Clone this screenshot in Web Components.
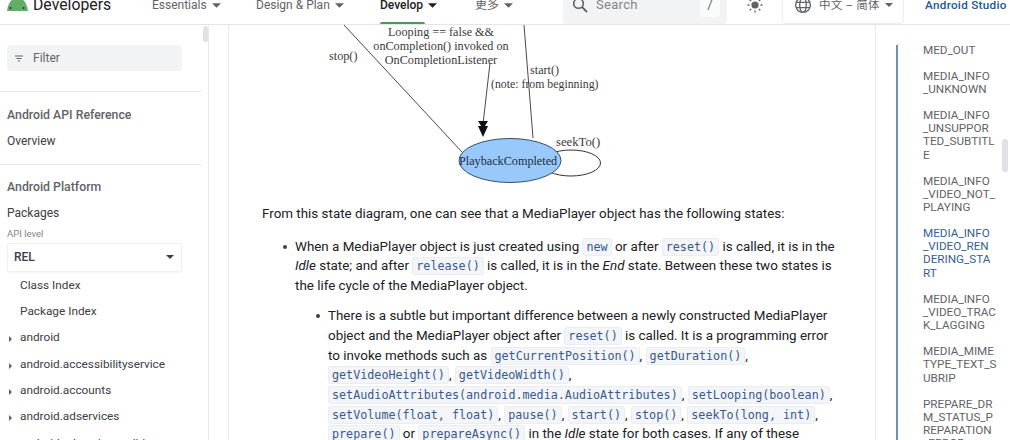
<!DOCTYPE html>
<html lang="zh"><head><meta charset="utf-8"><title>MediaPlayer</title>
<style>
html,body{margin:0;padding:0;background:#fff}
body{font-family:Roboto,"Noto Sans CJK SC",sans-serif;color:#202124}
</style></head><body>
<dev-page>
  <dev-header slot="header"></dev-header>
  <side-nav slot="nav">
    <nav-filter></nav-filter>
    <nav-rule></nav-rule>
    <nav-head>Android API Reference</nav-head>
    <nav-link>Overview</nav-link>
    <nav-rule tight></nav-rule>
    <nav-head>Android Platform</nav-head>
    <nav-link>Packages</nav-link>
    <api-select></api-select>
    <nav-link indent>Class Index</nav-link>
    <nav-link indent>Package Index</nav-link>
    <nav-link indent arrow>android</nav-link>
    <nav-link indent arrow>android.accessibilityservice</nav-link>
    <nav-link indent arrow>android.accounts</nav-link>
    <nav-link indent arrow>android.adservices</nav-link>
    <nav-link indent arrow>android.adservices.adid</nav-link>
  </side-nav>
  <doc-article slot="main">
    <state-diagram></state-diagram>
    <doc-para>From this state diagram, one can see that a MediaPlayer object has the following states:</doc-para>
    <doc-item>When a MediaPlayer object is just created using <c-chip>new</c-chip> or after <c-chip>reset()</c-chip> is called, it is in the<br><i>Idle</i> state; and after <c-chip>release()</c-chip> is called, it is in the <i>End</i> state. Between these two states is<br>the life cycle of the MediaPlayer object.</doc-item>
    <doc-item nested>There is a subtle but important difference between a newly constructed MediaPlayer<br>object and the MediaPlayer object after <c-chip>reset()</c-chip> is called. It is a programming error<br>to invoke methods such as <c-chip>getCurrentPosition()</c-chip>, <c-chip>getDuration()</c-chip>,<br><c-chip>getVideoHeight()</c-chip>, <c-chip>getVideoWidth()</c-chip>,<br><c-chip>setAudioAttributes(android.media.AudioAttributes)</c-chip>, <c-chip>setLooping(boolean)</c-chip>,<br><c-chip>setVolume(float, float)</c-chip>, <c-chip>pause()</c-chip>, <c-chip>start()</c-chip>, <c-chip>stop()</c-chip>, <c-chip>seekTo(long, int)</c-chip>,<br><c-chip>prepare()</c-chip> or <c-chip>prepareAsync()</c-chip> in the <i>Idle</i> state for both cases. If any of these</doc-item>
  </doc-article>
  <toc-rail slot="toc">
    <toc-item>MED_OUT</toc-item>
    <toc-item>MEDIA_INFO<br>_UNKNOWN</toc-item>
    <toc-item>MEDIA_INFO<br>_UNSUPPOR<br>TED_SUBTITL<br>E</toc-item>
    <toc-item>MEDIA_INFO<br>_VIDEO_NOT_<br>PLAYING</toc-item>
    <toc-item active>MEDIA_INFO<br>_VIDEO_REN<br>DERING_STA<br>RT</toc-item>
    <toc-item>MEDIA_INFO<br>_VIDEO_TRAC<br>K_LAGGING</toc-item>
    <toc-item>MEDIA_MIME<br>TYPE_TEXT_S<br>UBRIP</toc-item>
    <toc-item>PREPARE_DR<br>M_STATUS_P<br>REPARATION<br>_ERROR</toc-item>
  </toc-rail>
</dev-page>
<script>
const def=(name,html)=>{customElements.define(name,class extends HTMLElement{
  constructor(){super();this.attachShadow({mode:'open'}).innerHTML=html;}
});};
const caret=(c='#5f6368',w=9,h=5)=>`<svg width="${w}" height="${h}" viewBox="0 0 10 5" style="flex:none"><path d="M0 0h10L5 5z" fill="${c}"/></svg>`;

def('dev-page',`<style>
:host{display:flex;flex-direction:column;width:1010px;height:440px;overflow:hidden;background:#fff}
.row{display:flex;flex:1;min-height:0}
.gutter{width:19px;flex:none;background:#fff;border-right:1px solid #e8eaed}
</style>
<slot name="header"></slot>
<div class="row"><slot name="nav"></slot><div class="gutter"></div><slot name="main"></slot><slot name="toc"></slot></div>`);

def('dev-header',`<style>
:host{display:flex;align-items:center;position:relative;height:24px;border-bottom:1px solid #e3e5e8;box-sizing:content-box;overflow:hidden;font:12px/16px Roboto,"Noto Sans CJK SC",sans-serif;color:#5f6368;background:#fff}
.in{display:flex;align-items:center;height:10px;margin-top:-14px;width:100%}
.logo{display:flex;align-items:center;margin-left:7px;width:145px;flex:none;height:10px}
.brand{font-size:15.800px;color:#202124;margin-left:5px;line-height:20px}
.tab{display:flex;align-items:center;gap:5px;flex:none}
.dev{color:#202124;font-weight:500}
.search{display:flex;align-items:center;flex:none;width:164px;height:38px;margin-left:32px;background:#f1f3f4;border-radius:4px;box-sizing:border-box;padding-left:8px;color:#80868b;font-size:13px;letter-spacing:.3px}
.search b{font-weight:400;margin-left:7px;flex:1}
.key{width:20px;height:24px;background:#fafbfb;border-radius:4px;margin-right:7px;text-align:center;line-height:24px;color:#5f6368}
.lang{display:flex;align-items:center;height:38px;box-sizing:border-box;border:1px solid #eceef0;border-radius:4px;width:122px;margin-left:18px;padding-left:11px;gap:5px;flex:none;font-size:11.500px;letter-spacing:.2px}
.as{margin-left:21px;color:#1a5a96;font-weight:500;font-size:11.700px;white-space:nowrap;letter-spacing:.3px}
.sun{margin-left:19px;flex:none}
.bar{position:absolute;left:380px;top:22px;width:45px;height:2px;background:#4c9a55;border-radius:2px 2px 0 0}
</style>
<div class="in">
<div class="logo"><svg width="21" height="11" viewBox="0 0 21 11" style="flex:none"><path d="M0 11C.8 4 4 -2 10.500 -2S20.200 4 21 11z" fill="#62ab69"/><circle cx="3.500" cy="8" r="1" fill="#1d3a22"/><circle cx="16.500" cy="8" r="1" fill="#1d3a22"/></svg><span class="brand">Developers</span></div>
<div class="tab" style="width:104px">Essentials ${caret()}</div>
<div class="tab" style="width:124px">Design &amp; Plan ${caret()}</div>
<div class="tab dev" style="width:95px">Develop ${caret('#202124')}</div>
<div class="tab" style="width:56px">更多 ${caret()}</div>
<div class="search"><svg width="18" height="18" viewBox="0 0 18 18"><circle cx="7.500" cy="7.500" r="4.800" fill="none" stroke="#5f6368" stroke-width="1.600"/><path d="M11 11l5 5" stroke="#5f6368" stroke-width="1.800"/></svg><b>Search</b><span class="key">/</span></div>
<svg class="sun" width="18" height="18" viewBox="0 0 18 18"><circle cx="9" cy="9" r="3.600" fill="#5f6368"/><path d="M9 1.500v2M9 14.500v2M1.500 9h2M14.500 9h2M3.700 3.700l1.400 1.400M12.900 12.900l1.400 1.400M3.700 14.300l1.400-1.400M12.900 5.100l1.400-1.400" stroke="#5f6368" stroke-width="1.400"/></svg>
<div class="lang"><svg width="18" height="18" viewBox="0 0 18 18" fill="none" stroke="#5f6368" stroke-width="1.300" style="flex:none;margin-right:2px"><circle cx="9" cy="9" r="7.400"/><ellipse cx="9" cy="9" rx="3.300" ry="7.400"/><path d="M2 6.400h14M2 11.600h14"/></svg><span>中文 – 简体</span>${caret('#5f6368',8,4)}</div>
<div class="as">Android Studio</div>
</div>
<div class="bar"></div>`);

def('side-nav',`<style>
:host{display:block;width:208px;flex:none;box-sizing:content-box;border-right:1px solid #e8eaed;position:relative;overflow:hidden;background:#fff;font-size:12px}
.pad{padding-top:20px}
.thumb{position:absolute;right:0;top:1px;width:5px;height:16px;border-radius:3px;background:#dfe1e4}
</style><div class="pad"><slot></slot></div><div class="thumb"></div>`);

def('nav-filter',`<style>
:host{display:flex;align-items:center;margin-left:7px;width:175px;height:26px;background:#f1f3f4;border-radius:4px;color:#5f6368;font-size:12px}
svg{margin:0 10px 0 8px}
</style><svg width="8" height="7" viewBox="0 0 8 7"><path d="M0 1h8M1.500 3.500h5M3 6h2" stroke="#5f6368" stroke-width="1"/></svg>Filter`);

def('nav-rule',`<style>:host{display:block;width:202px;height:1px;background:#e8eaed;margin:20px 0 0}:host([tight]){margin-top:10px}</style>`);

def('nav-head',`<style>:host{display:block;margin:14.500px 0 5px 7px;font-weight:500;font-size:12.300px;line-height:16px;color:#5f6368}</style><slot></slot>`);

def('nav-link',`<style>
:host{display:block;position:relative;height:26.350px;line-height:26.350px;padding-left:7px;font-size:12px;color:#3c4043;white-space:nowrap}
:host([indent]){padding-left:20px;font-size:11.800px}
.a{display:none;position:absolute;left:9px;top:12px;width:0;height:0;border-left:3px solid #5f6368;border-top:3px solid transparent;border-bottom:3px solid transparent}
:host([arrow]) .a{display:block}
</style><span class="a"></span><slot></slot>`);

def('api-select',`<style>
:host{display:block;margin:3px 0 0 7px;width:175px;color:#3c4043}
.l{font-size:9.500px;line-height:12px;color:#80868b;height:12px;margin-top:-2px}
.b{display:flex;align-items:center;justify-content:space-between;height:29px;margin-top:3px;border:1px solid #eef0f2;box-sizing:border-box;border-radius:2px;padding:0 7px 0 6px;font-weight:500;font-size:12px;color:#3c4043;box-shadow:0 1px 2px rgba(60,64,67,.06)}
</style><div class="l">API level</div><div class="b">REL ${caret('#3c4043',8,4)}</div>`);

def('doc-article',`<style>
:host{display:block;flex:1;min-width:0;box-sizing:border-box;border-right:1px solid #e8eaed;overflow:hidden;font-size:13.400px;line-height:19.700px;color:#202124;background:#fff}
</style><slot></slot>`);

def('state-diagram',`<style>
:host{display:block;height:179px}
svg{display:block}
text{font-family:"Liberation Serif",serif;font-size:12.200px;fill:#3a3a3a}
</style>
<svg width="646" height="179" viewBox="229 25 646 179">
<g fill="none" stroke="#4a4a4a" stroke-width="1">
<path d="M344 25L462 152"/><path d="M524 25L533 138"/><path d="M490 63L483 124"/>
<ellipse cx="571" cy="163" rx="29.500" ry="13" stroke="#333"/></g>
<path d="M478 121h10l-5 8z" fill="#111"/><path d="M478 126h10l-5 11z" fill="#111"/>
<ellipse cx="510" cy="160.500" rx="51" ry="22" fill="#99c9fb" stroke="#30506f" stroke-width="1"/>
<text x="441" y="36" text-anchor="middle">Looping == false &amp;&amp;</text>
<text x="441" y="50" text-anchor="middle">onCompletion() invoked on</text>
<text x="441" y="64" text-anchor="middle">OnCompletionListener</text>
<text x="329" y="60">stop()</text>
<text x="530" y="74">start()</text>
<text x="491" y="88" style="font-size:11.800px">(note: from beginning)</text>
<text x="556" y="146" style="font-size:12.700px">seekTo()</text>
<text x="459" y="165" style="fill:#1c2c40">PlaybackCompleted</text>
</svg>`);

def('doc-para',`<style>:host{display:block;margin:0 0 13px 33px;white-space:nowrap}</style><slot></slot>`);
def('doc-item',`<style>
:host{display:flex;margin:0 0 10.300px 54px;white-space:nowrap}
:host([nested]){margin-left:87px}
.d{flex:none;width:4px;height:4px;border-radius:50%;background:#3c4043;margin:8px 8px 0 0}
</style><span class="d"></span><div><slot></slot></div>`);
def('c-chip',`<style>
:host{display:inline;font-family:"DejaVu Sans Mono",monospace;font-size:11.720px;line-height:1;color:#37598f;background:#f3f5f8;border:1px solid #ebedf0;border-radius:3px;padding:1px 3px}
</style><slot></slot>`);

def('toc-rail',`<style>
:host{display:block;width:134px;flex:none;position:relative;overflow:hidden;background:#fff}
.line{position:absolute;left:20px;top:20px;bottom:0;width:2px;background:#6b94b9}
.list{padding:18.600px 0 0 47px}
.thumb{position:absolute;left:125.500px;top:114px;width:6px;height:33px;border-radius:3px;background:#dfe1e4}
</style><div class="line"></div><div class="list"><slot></slot></div><div class="thumb"></div>`);
def('toc-item',`<style>
:host{display:block;font-size:11.700px;line-height:13.100px;color:#5f6368;margin-bottom:13.200px;white-space:nowrap}
:host([active]){color:#345f96}
</style><slot></slot>`);
</script>
</body></html>
